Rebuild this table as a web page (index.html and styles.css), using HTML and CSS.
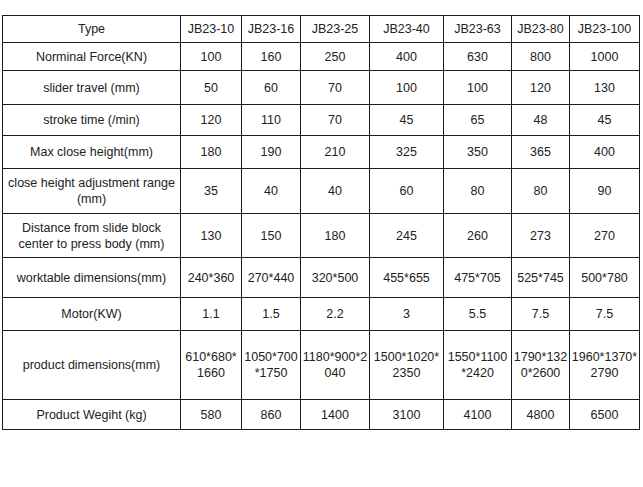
FILE: index.html
```html
<!DOCTYPE html>
<html>
<head>
<meta charset="utf-8">
<link rel="stylesheet" href="styles.css">
</head>
<body>
<table class="spec">
  <colgroup>
    <col class="c-label"><col class="c1"><col class="c2"><col class="c3"><col class="c4"><col class="c5"><col class="c6"><col class="c7">
  </colgroup>
  <tr class="h27"><td>Type</td><td>JB23-10</td><td>JB23-16</td><td>JB23-25</td><td>JB23-40</td><td>JB23-63</td><td>JB23-80</td><td>JB23-100</td></tr>
  <tr class="h28"><td>Norminal Force(KN)</td><td>100</td><td>160</td><td>250</td><td>400</td><td>630</td><td>800</td><td>1000</td></tr>
  <tr class="h34"><td>slider travel (mm)</td><td>50</td><td>60</td><td>70</td><td>100</td><td>100</td><td>120</td><td>130</td></tr>
  <tr class="h31"><td>stroke time (/min)</td><td>120</td><td>110</td><td>70</td><td>45</td><td>65</td><td>48</td><td>45</td></tr>
  <tr class="h33"><td>Max close height(mm)</td><td>180</td><td>190</td><td>210</td><td>325</td><td>350</td><td>365</td><td>400</td></tr>
  <tr class="h45"><td>close height adjustment range<br>(mm)</td><td>35</td><td>40</td><td>40</td><td>60</td><td>80</td><td>80</td><td>90</td></tr>
  <tr class="h44"><td>Distance from slide block<br>center to press body (mm)</td><td>130</td><td>150</td><td>180</td><td>245</td><td>260</td><td>273</td><td>270</td></tr>
  <tr class="h40"><td>worktable dimensions(mm)</td><td>240*360</td><td>270*440</td><td>320*500</td><td>455*655</td><td>475*705</td><td>525*745</td><td>500*780</td></tr>
  <tr class="h33"><td>Motor(KW)</td><td>1.1</td><td>1.5</td><td>2.2</td><td>3</td><td>5.5</td><td>7.5</td><td>7.5</td></tr>
  <tr class="h69"><td>product dimensions(mm)</td><td>610*680*<br>1660</td><td>1050*700<br>*1750</td><td>1180*900*2<br>040</td><td>1500*1020*<br>2350</td><td>1550*1100<br>*2420</td><td>1790*132<br>0*2600</td><td>1960*1370*<br>2790</td></tr>
  <tr class="h30"><td>Product Wegiht (kg)</td><td>580</td><td>860</td><td>1400</td><td>3100</td><td>4100</td><td>4800</td><td>6500</td></tr>
</table>
</body>
</html>
```

FILE: styles.css
```css
html, body {
  margin: 0;
  padding: 0;
  background: #ffffff;
}

body {
  padding: 15px 0 0 2px;
  font-family: "Liberation Sans", Arial, sans-serif;
  font-size: 12.5px;
  color: #222222;
}

.spec {
  border-collapse: collapse;
  table-layout: fixed;
  width: 637px;
}

.spec td {
  border: 1px solid #1c1c1c;
  padding: 0;
  text-align: center;
  vertical-align: middle;
  line-height: 16px;
  white-space: nowrap;
  overflow: visible;
}

.c-label { width: 178px; }
.c1 { width: 61px; }
.c2 { width: 59px; }
.c3 { width: 69px; }
.c4 { width: 74px; }
.c5 { width: 68px; }
.c6 { width: 58px; }
.c7 { width: 70px; }

.h27 { height: 27px; }
.h28 { height: 28px; }
.h30 { height: 30px; }
.h31 { height: 31px; }
.h33 { height: 33px; }
.h34 { height: 34px; }
.h40 { height: 40px; }
.h44 { height: 44px; }
.h45 { height: 45px; }
.h69 { height: 69px; }
```
